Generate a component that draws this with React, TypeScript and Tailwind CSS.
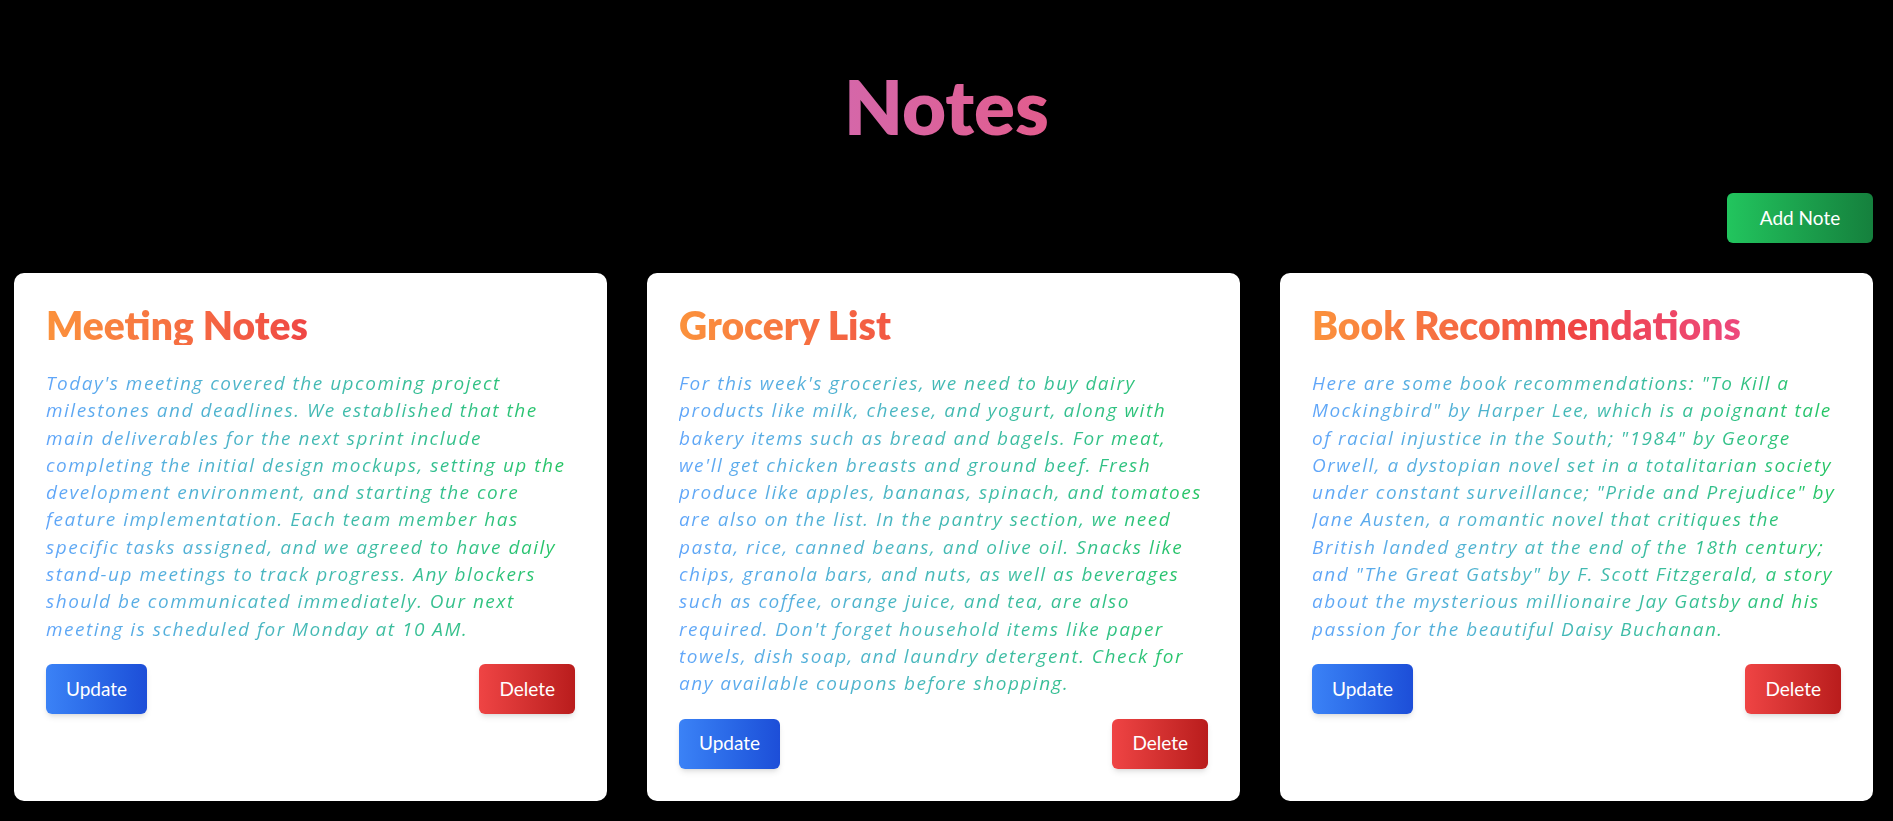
import React from "react";

const notes = [
  {
    title: "Meeting Notes",
    lines: [
      "Today's meeting covered the upcoming project",
      "milestones and deadlines. We established that the",
      "main deliverables for the next sprint include",
      "completing the initial design mockups, setting up the",
      "development environment, and starting the core",
      "feature implementation. Each team member has",
      "specific tasks assigned, and we agreed to have daily",
      "stand-up meetings to track progress. Any blockers",
      "should be communicated immediately. Our next",
      "meeting is scheduled for Monday at 10 AM.",
    ],
  },
  {
    title: "Grocery List",
    lines: [
      "For this week's groceries, we need to buy dairy",
      "products like milk, cheese, and yogurt, along with",
      "bakery items such as bread and bagels. For meat,",
      "we'll get chicken breasts and ground beef. Fresh",
      "produce like apples, bananas, spinach, and tomatoes",
      "are also on the list. In the pantry section, we need",
      "pasta, rice, canned beans, and olive oil. Snacks like",
      "chips, granola bars, and nuts, as well as beverages",
      "such as coffee, orange juice, and tea, are also",
      "required. Don't forget household items like paper",
      "towels, dish soap, and laundry detergent. Check for",
      "any available coupons before shopping.",
    ],
  },
  {
    title: "Book Recommendations",
    lines: [
      "Here are some book recommendations: \"To Kill a",
      "Mockingbird\" by Harper Lee, which is a poignant tale",
      "of racial injustice in the South; \"1984\" by George",
      "Orwell, a dystopian novel set in a totalitarian society",
      "under constant surveillance; \"Pride and Prejudice\" by",
      "Jane Austen, a romantic novel that critiques the",
      "British landed gentry at the end of the 18th century;",
      "and \"The Great Gatsby\" by F. Scott Fitzgerald, a story",
      "about the mysterious millionaire Jay Gatsby and his",
      "passion for the beautiful Daisy Buchanan.",
    ],
  },
];

function NoteCard({ title, lines }: { title: string; lines: string[] }) {
  return (
    <div className="flex flex-col rounded-[10px] bg-white p-8">
      <h2 className="bg-linear-to-r from-[#fb923c] via-[#ef4444] to-[#ec4899] bg-clip-text font-['Lato',sans-serif] text-[39px] font-extrabold leading-[40px] text-transparent">
        {title}
      </h2>
      <p className="mt-[25px] whitespace-nowrap bg-linear-to-r from-[#60a5fa] to-[#22c55e] bg-clip-text text-[19px] italic leading-[27.3px] tracking-[1.5px] text-transparent">
        {lines.map((l, i) => (
          <React.Fragment key={i}>
            {l}
            {i < lines.length - 1 && <br />}
          </React.Fragment>
        ))}
      </p>
      <div className="mt-[21px] flex items-center justify-between font-['Lato',sans-serif]">
        <button className="h-[50px] rounded-md bg-linear-to-r from-[#3b82f6] to-[#1d4ed8] px-5 text-[19px] text-white shadow-md">
          Update
        </button>
        <button className="h-[50px] rounded-md bg-linear-to-r from-[#ef4444] to-[#b91c1c] px-5 text-[19px] text-white shadow-md">
          Delete
        </button>
      </div>
    </div>
  );
}

export default function App() {
  return (
    <div className="min-h-screen bg-black pb-4 font-['Open_Sans',sans-serif]">
      <h1 className="pt-[68px] text-center font-['Lato',sans-serif] text-[76px] font-extrabold leading-[76px]">
        <span className="bg-linear-to-r from-[#d567a9] to-[#e25c8d] bg-clip-text text-transparent">
          Notes
        </span>
      </h1>
      <div className="mr-[20px] mt-[49px] flex justify-end">
        <button className="h-[50px] w-[146px] rounded-md bg-linear-to-r from-[#22c55e] to-[#15803d] font-['Lato',sans-serif] text-[19px] text-white">
          Add Note
        </button>
      </div>
      <div className="ml-[14px] mr-[20px] mt-[30px] grid grid-cols-3 gap-10">
        {notes.map((n) => (
          <NoteCard key={n.title} title={n.title} lines={n.lines} />
        ))}
      </div>
    </div>
  );
}
